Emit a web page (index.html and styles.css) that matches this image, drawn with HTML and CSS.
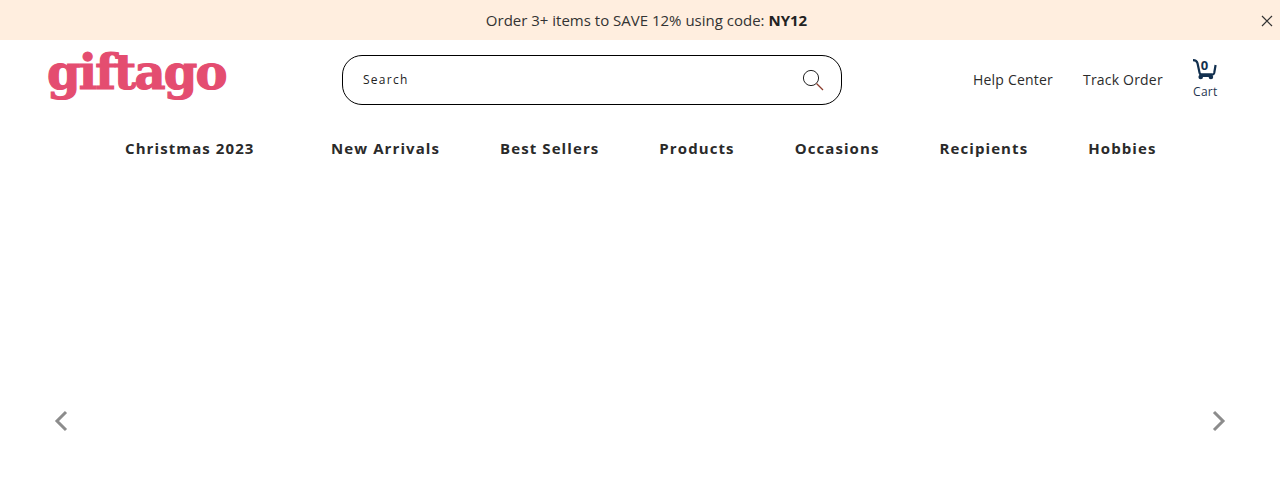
FILE: index.html
```html
<!DOCTYPE html>
<html lang="en">
<head>
<meta charset="utf-8">
<title>Giftago</title>
<link rel="stylesheet" href="styles.css">
</head>
<body>
<div class="promo">
  <p class="promo-text">Order 3+ items to SAVE 12% using code: <strong>NY12</strong></p>
  <button class="promo-close" aria-label="Close">
    <svg width="12" height="12" viewBox="0 0 12 12"><path d="M1 1l10 10M11 1L1 11" stroke="#333" stroke-width="1.2" fill="none"/></svg>
  </button>
</div>
<header class="header">
  <a class="logo">giftago</a>
  <div class="search">
    <span class="search-label">Search</span>
    <svg class="search-icon" width="22" height="22" viewBox="0 0 22 22"><circle cx="9" cy="9" r="7.6" stroke="#222" stroke-width="1" fill="none"/><path d="M14.5 14.5l6.5 6.5" stroke="#8a3a2a" stroke-width="1.2" fill="none"/></svg>
  </div>
  <div class="links">
    <a class="link">Help Center</a>
    <a class="link">Track Order</a>
    <a class="cart">
      <span class="cart-icon">
        <svg width="25" height="21" viewBox="0 0 25 21"><path d="M1 1.2c3 0 4 1 4.5 3L7.6 14q.3 1.6 2 1.6h10.6q1.6 0 2-1.6L23.6 6" stroke="#12304f" stroke-width="2.2" fill="none"/><circle cx="8.7" cy="18" r="2.3" fill="#12304f"/><circle cx="18.9" cy="18" r="2.3" fill="#12304f"/><path d="M8 14.5h12v3.5H8z" fill="#12304f"/></svg>
        <span class="cart-count">0</span>
      </span>
      <span class="cart-label">Cart</span>
    </a>
  </div>
</header>
<nav class="nav">
  <a class="nav-item nav-first">Christmas 2023</a>
  <a class="nav-item">New Arrivals</a>
  <a class="nav-item">Best Sellers</a>
  <a class="nav-item">Products</a>
  <a class="nav-item">Occasions</a>
  <a class="nav-item">Recipients</a>
  <a class="nav-item">Hobbies</a>
</nav>
<section class="carousel">
  <svg width="16" height="22" viewBox="0 0 16 22"><path d="M13 2L4 11l9 9" stroke="#8c8c8c" stroke-width="3" fill="none"/></svg>
  <svg width="16" height="22" viewBox="0 0 16 22"><path d="M3 2l9 9-9 9" stroke="#8c8c8c" stroke-width="3" fill="none"/></svg>
</section>
</body>
</html>
```

FILE: styles.css
```css
* { box-sizing: border-box; }
html, body { margin: 0; padding: 0; }
body {
  width: 1280px;
  height: 480px;
  overflow: hidden;
  background: #fff;
  font-family: "Open Sans", sans-serif;
  color: #222;
}
.promo {
  height: 40px;
  background: #ffeedf;
  display: flex;
  align-items: center;
  justify-content: center;
  position: relative;
}
.promo-text {
  margin: 0;
  font-size: 15px;
  color: #333;
  padding-left: 13px;
}
.promo-text strong { font-weight: 700; color: #222; }
.promo-close {
  position: absolute;
  right: 7px;
  top: 15px;
  padding: 0;
  border: 0;
  background: none;
  display: flex;
}
.header {
  height: 80px;
  display: flex;
  align-items: flex-start;
  padding-left: 47px;
}
.logo {
  width: 295px;
  font-family: "DejaVu Serif", serif;
  font-weight: 700;
  font-size: 48px;
  line-height: 64px;
  letter-spacing: -1.8px;
  color: #e44d70;
  -webkit-text-stroke: 1.2px #e44d70;
}
.search {
  width: 500px;
  height: 50px;
  margin-top: 15px;
  border: 1px solid #000;
  border-radius: 20px;
  display: flex;
  align-items: center;
  justify-content: space-between;
  padding: 0 17px 1px 20px;
}
.search-label {
  font-size: 12px;
  letter-spacing: 1.25px;
  color: #222;
}
.links {
  display: flex;
  align-items: flex-start;
  margin-left: 131px;
  gap: 30px;
}
.link {
  font-size: 14px;
  line-height: 20px;
  margin-top: 30px;
  letter-spacing: 0.2px;
  color: #2b2b2b;
}
.cart {
  display: flex;
  flex-direction: column;
  align-items: center;
  margin-top: 19px;
}
.cart-icon {
  position: relative;
  display: flex;
  height: 24px;
  left: -1px;
}
.cart-count {
  position: absolute;
  left: 9px;
  top: -1px;
  font-size: 13px;
  line-height: 14px;
  font-weight: 700;
  color: #12304f;
}
.cart-label {
  font-size: 12px;
  line-height: 17px;
  letter-spacing: 0.3px;
  color: #1f3550;
}
.nav {
  display: flex;
  gap: 60px;
  padding-left: 125px;
  height: 56px;
  align-items: center;
}
.nav-item {
  font-size: 15px;
  font-weight: 700;
  letter-spacing: 1.09px;
  color: #2a2a2a;
  white-space: nowrap;
}
.nav-first { margin-right: 16.5px; }
.carousel {
  display: flex;
  justify-content: space-between;
  padding: 0 53px;
  margin-top: 234px;
}
```
